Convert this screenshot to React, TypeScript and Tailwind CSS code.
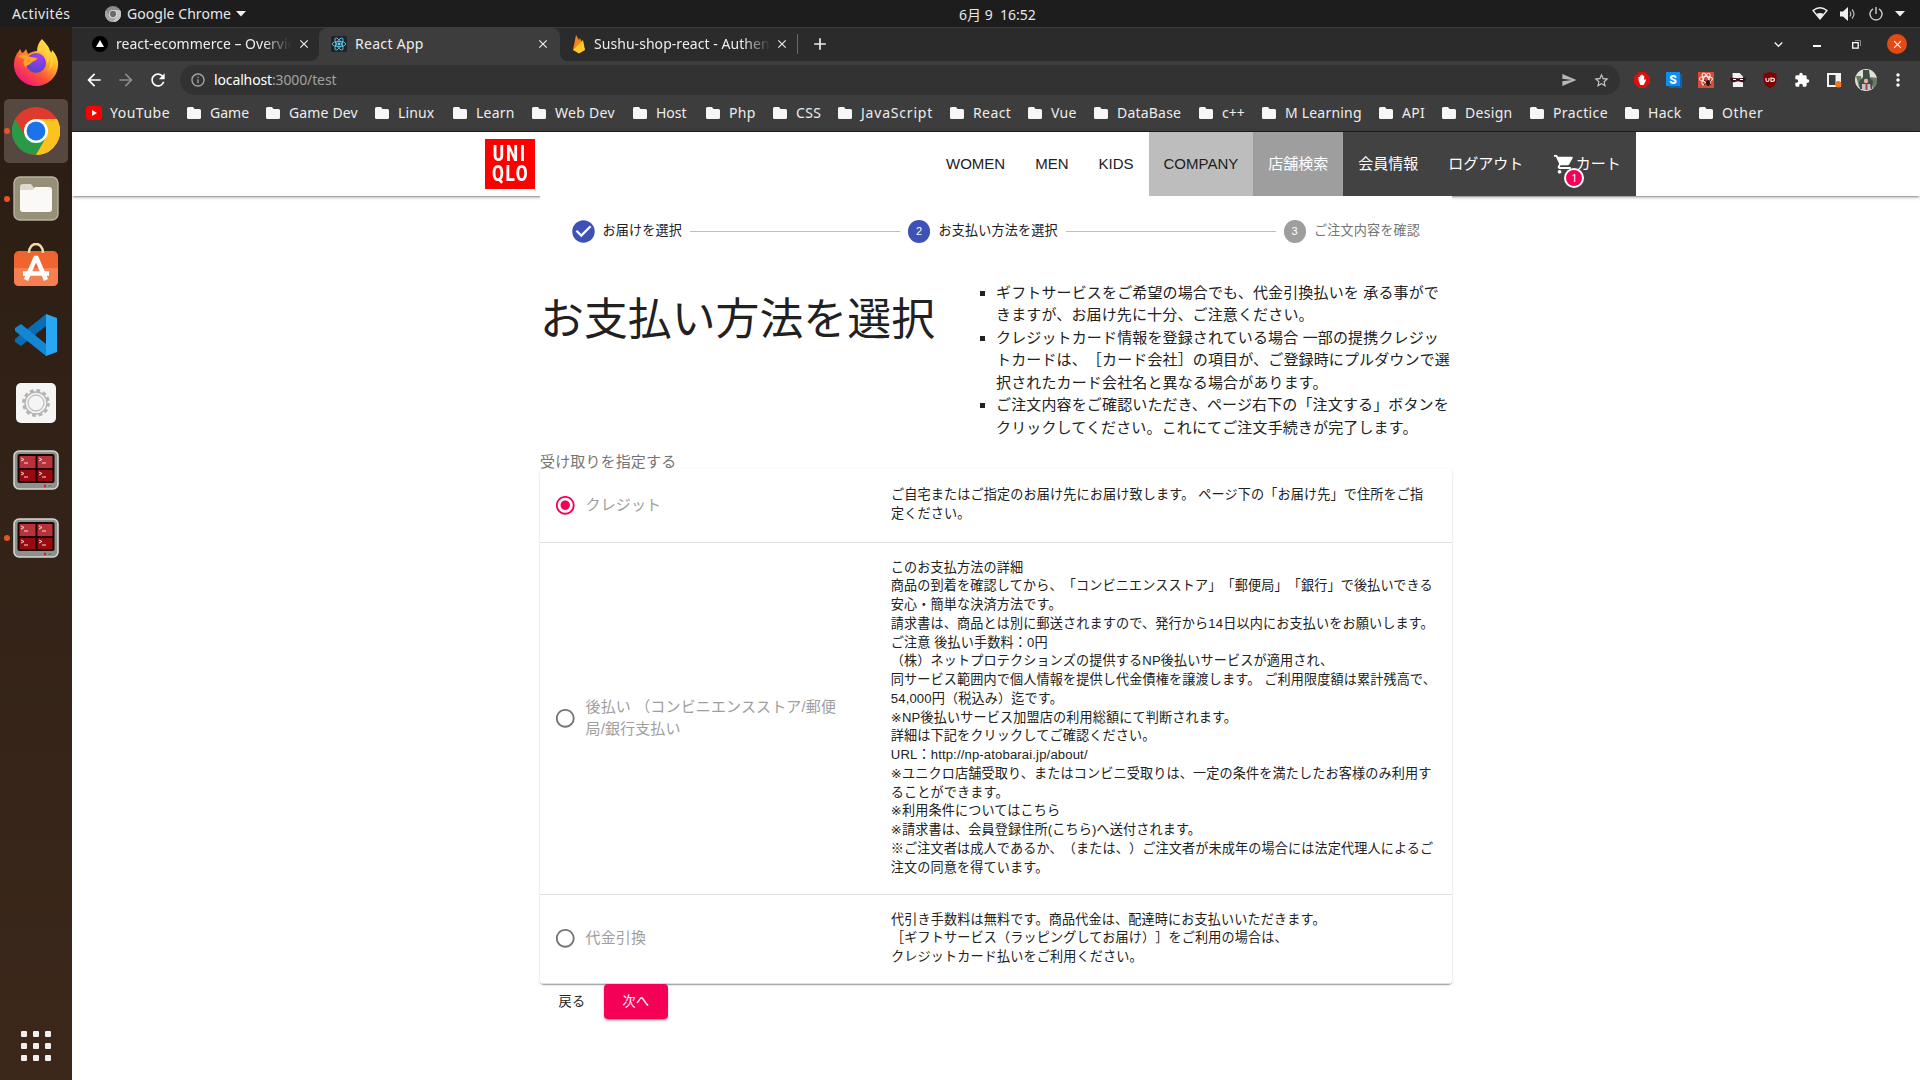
import React from "react";
import {
  MdArrowBack, MdArrowForward, MdRefresh, MdInfoOutline, MdClose, MdAdd, MdSend, MdStarOutline,
  MdExtension, MdMoreVert, MdShoppingCart, MdCheckCircle, MdExpandMore,
  MdRadioButtonChecked, MdRadioButtonUnchecked,
} from "react-icons/md";

const UI = "font-['Noto_Sans','Noto_Sans_CJK_JP',sans-serif]";

function ChromeLogo({ size, gray = false }: { size: number; gray?: boolean }) {
  const c = gray ? ["#8b8b8b", "#c4c4c4", "#a6a6a6", "#6b6b6b", "#e3e3e3"] : ["#de3b2d", "#fcc31e", "#2a9a48", "#1a73e8", "#fff"];
  return (
    <svg width={size} height={size} viewBox="0 0 48 48">
      <circle cx="24" cy="24" r="24" fill={c[0]} />
      <path d="M24 12h20.8A24 24 0 0 1 24 48l10.4-18z" fill={c[1]} />
      <path d="M3.2 12A24 24 0 0 0 24 48l10.4-18L24 24l-10.4 6z" fill={c[2]} />
      <path d="M24 48A24 24 0 0 0 44.8 12H24v12l10.4 6z" fill={c[1]} />
      <circle cx="24" cy="24" r="12" fill={c[4]} />
      <circle cx="24" cy="24" r="9.4" fill={c[3]} />
    </svg>
  );
}

function FirefoxLogo() {
  return (
    <svg width="46" height="47" viewBox="0 0 46 47">
      <defs>
        <linearGradient id="ff" x1="0.85" y1="0.05" x2="0.2" y2="0.95">
          <stop offset="0" stopColor="#fff44f" />
          <stop offset="0.35" stopColor="#ffb32c" />
          <stop offset="0.65" stopColor="#ff5634" />
          <stop offset="1" stopColor="#f0147e" />
        </linearGradient>
        <radialGradient id="fp" cx="0.6" cy="0.2" r="0.9">
          <stop offset="0" stopColor="#a43df0" />
          <stop offset="1" stopColor="#4c46c9" />
        </radialGradient>
      </defs>
      <path d="M29 0c3 4 7 7 8 12l1 3 1-4c3 3 7 9 6 16-1 12-11 20-22 20S1 38 1 26c0-6 2-11 5-14l1-2 2 4c2-1 3-2 4-4l2 5c3-2 7-3 9-3 0-5 2-9 5-12z" fill="url(#ff)" />
      <circle cx="23" cy="24" r="10" fill="url(#fp)" />
      <path d="M5 17c6-3 9 0 13 1l6 1c0 3-4 3-6 5-2 3-5 1-5 5-3-3-3-7-1-9-3-1-5-1-7-3z" fill="#ffa22a" />
      <path d="M25 12c6 0 10 5 9 12 3-2 2-5 2-7 3 4 2 11-1 15 5-4 7-12 3-19l-7-7-2-5c-2 4-2 7-4 11z" fill="#ffd23e" />
    </svg>
  );
}

function FilesIcon() {
  return (
    <svg width="46" height="46" viewBox="0 0 46 46">
      <rect x="1" y="1" width="44" height="43" rx="6" fill="#969079" stroke="#b7b29e" strokeWidth="1.4" />
      <path d="M7 11q0-3 3-3h8l3 4h16v6H7z" fill="#dcd9cb" />
      <path d="M7 14h13l2-3h14q3 0 3 3v19q0 3-3 3H10q-3 0-3-3z" fill="#faf9f7" />
    </svg>
  );
}

function SoftwareIcon() {
  return (
    <svg width="46" height="44" viewBox="0 0 46 44">
      <rect x="1" y="8" width="44" height="35" rx="5" fill="#f0642f" />
      <path d="M1 25h44v13q0 5-5 5H6q-5 0-5-5z" fill="#f47f50" />
      <path d="M16 10c0-12 14-12 14 0" fill="none" stroke="#f6d9a8" strokeWidth="2.6" />
      <path d="M13 37l9.500-22h1L33 37M10 30.500h26" fill="none" stroke="#fff" strokeWidth="4.500" />
    </svg>
  );
}

function CodeIcon() {
  return (
    <svg width="42" height="42" viewBox="0 0 42 42">
      <path d="M31 0v12L6 32 0 28v-3z" fill="#0a6cb3" />
      <path d="M31 42V30L6 10 0 14v3z" fill="#1387d2" />
      <path d="M31 0l11 4v34l-11 4z" fill="#2aa7f2" />
    </svg>
  );
}

function SettingsIcon() {
  return (
    <svg width="40" height="40" viewBox="0 0 40 40">
      <rect width="40" height="40" rx="5" fill="#f5f5f5" />
      <circle cx="20" cy="20" r="12.600" fill="none" stroke="#b3b3b3" strokeWidth="2.600" strokeDasharray="3.800 2.800" />
      <circle cx="20" cy="20" r="11" fill="#f5f5f5" stroke="#b3b3b3" strokeWidth="1.300" />
      <circle cx="20" cy="20" r="8" fill="none" stroke="#c0c0c0" strokeWidth="1.300" />
    </svg>
  );
}

function TerminalIcon() {
  return (
    <svg width="46" height="40" viewBox="0 0 46 40">
      <rect x="1" y="1" width="44" height="38" rx="5" fill="#8d918b" stroke="#d4d6d2" strokeWidth="1.600" />
      <rect x="4.500" y="4" width="37" height="29" rx="2" fill="#1c0505" />
      <path d="M6.500 6h16v12h-16zM24.500 6h15v12h-15z" fill="#b9323a" />
      <path d="M6.500 20h16v11h-16zM24.500 20h15v11h-15z" fill="#980a0f" />
      <path d="M8 8l3 1.500L8 11M11 13h4M26 8l3 1.500-3 1.500M29 13h4M8 22l3 1.500L8 25M11 27h4M26 22l3 1.500-3 1.500M29 27h4" stroke="#f3dada" fill="none" />
      <circle cx="32" cy="36" r="1.200" fill="#e11" />
      <rect x="34.500" y="34.700" width="5" height="2.600" rx="1.300" fill="#777" stroke="#aaa" strokeWidth="0.500" />
    </svg>
  );
}

function DockSlot({ running, active, className, children }: { running?: boolean; active?: boolean; className: string; children: React.ReactNode }) {
  return (
    <div className={`relative flex w-16 shrink-0 items-center justify-center rounded-[5px] ${active ? "bg-[#564841]" : ""} ${className}`}>
      {running && <span className="absolute top-1/2 left-0 h-1.5 w-1.5 -translate-y-1/2 rounded-full bg-[#e95420]" />}
      {children}
    </div>
  );
}

function Dock() {
  return (
    <aside className="flex w-[72px] shrink-0 flex-col items-center bg-gradient-to-b from-[#2b1d14] to-[#3c281b] pt-[3px]">
      <DockSlot className="h-16"><FirefoxLogo /></DockSlot>
      <DockSlot running active className="mt-[5px] h-16"><ChromeLogo size={48} /></DockSlot>
      <DockSlot running className="mt-1 h-16"><FilesIcon /></DockSlot>
      <DockSlot className="mt-0.5 h-16"><SoftwareIcon /></DockSlot>
      <DockSlot className="mt-1.5 h-16"><CodeIcon /></DockSlot>
      <DockSlot className="mt-1 h-16"><SettingsIcon /></DockSlot>
      <DockSlot className="mt-[3px] h-16"><TerminalIcon /></DockSlot>
      <DockSlot running className="mt-1 h-16"><TerminalIcon /></DockSlot>
      <div className="mt-auto mb-[19px] grid grid-cols-3 gap-1.5">
        {Array.from({ length: 9 }, (_, i) => <span key={i} className="h-1.5 w-1.5 rounded-[1px] bg-[#f1f0ee]" />)}
      </div>
    </aside>
  );
}

function SystemBar() {
  return (
    <div className={`flex h-[27px] items-center bg-[#1d1d1d] text-[14px] text-[#e8e8e8] ${UI}`}>
      <div className="w-[105px] pl-3 tracking-[0.4px]">Activités</div>
      <ChromeLogo size={16} gray />
      <div className="ml-1.5 w-[109px] tracking-[0.05px] whitespace-nowrap">Google Chrome</div>
      <svg width="10" height="6" viewBox="0 0 10 6"><path d="M0 0h10L5 5.500z" fill="#eee" /></svg>
      <div className="ml-[713px] w-[80px] pt-0.5 whitespace-pre">6月 9  16:52</div>
      <div className="ml-auto flex items-center pr-[15px]">
        <svg width="16" height="13" viewBox="0 0 16 13"><path d="M1 3.500Q8-2 15 3.500L8 12z" fill="none" stroke="#eee" strokeWidth="1.300" /><path d="M4.300 7Q8 5 11.700 7L8 12.500z" fill="#eee" /></svg>
        <svg className="ml-3" width="16" height="14" viewBox="0 0 16 14"><path d="M0 4.500h3L8 0v14L3 9.500H0z" fill="#eee" /><path d="M9.800 4.500q2 2.500 0 5M12 2.500q4 4.500 0 9" fill="none" stroke="#bbb" strokeWidth="1.200" /></svg>
        <svg className="ml-[13px]" width="14" height="14" viewBox="0 0 14 14"><path d="M4 1.800a6 6 0 1 0 6 0M7 0v7" fill="none" stroke="#ccc" strokeWidth="1.400" /></svg>
        <svg className="ml-3" width="10" height="6" viewBox="0 0 10 6"><path d="M0 0h10L5 5.500z" fill="#eee" /></svg>
      </div>
    </div>
  );
}

function ReactMark() {
  return (
    <svg width="16" height="16" viewBox="0 0 16 16">
      <rect width="16" height="16" rx="1.500" fill="#20232a" />
      <g fill="none" stroke="#61dafb" strokeWidth="0.800">
        <ellipse cx="8" cy="8" rx="6.800" ry="2.600" />
        <ellipse cx="8" cy="8" rx="6.800" ry="2.600" transform="rotate(60 8 8)" />
        <ellipse cx="8" cy="8" rx="6.800" ry="2.600" transform="rotate(120 8 8)" />
      </g>
      <circle cx="8" cy="8" r="1.400" fill="#61dafb" />
    </svg>
  );
}

function TabStrip() {
  const fade = "[mask-image:linear-gradient(to_right,black_84%,transparent)]";
  return (
    <div className="flex h-[34px] border-t border-[#3c3c3c] bg-[#3d3d3d] text-[14px] text-[#ededed]">
      <div className="flex w-[247px] items-center rounded-br-lg bg-[#2b2b2b] pb-px pl-5">
        <svg width="16" height="16" viewBox="0 0 16 16"><circle cx="8" cy="8" r="8" fill="#000" /><path d="M8 4l4 7H4z" fill="#fff" /></svg>
        <span className={`ml-2 w-[175px] overflow-hidden pb-px whitespace-nowrap ${fade}`}>react-ecommerce – Overview</span>
        <MdClose className="ml-1.5" size={14} />
      </div>
      <div className="bg-[#2b2b2b]">
        <div className="flex h-full w-[241px] items-center rounded-t-lg bg-[#3d3d3d] pb-px pl-3">
          <ReactMark />
          <span className="ml-2 w-[181px] pb-px tracking-[0.3px]">React App</span>
          <MdClose size={14} />
        </div>
      </div>
      <div className="flex flex-1 items-center rounded-bl-lg bg-[#2b2b2b] pb-px pl-3">
        <svg width="14" height="20" viewBox="0 0 14 20"><path d="M1 16L4 1l3 5 1-2 5 12z" fill="#f58220" /><path d="M1 16L11 6l2 10-6 3.500z" fill="#ffca28" /></svg>
        <span className={`ml-2 w-[177px] overflow-hidden pb-px tracking-[0.05px] whitespace-nowrap ${fade}`}>Sushu-shop-react - Authentication</span>
        <MdClose className="ml-1" size={14} />
        <span className="ml-2 h-5 w-px bg-[#6b6b6b]" />
        <MdAdd className="ml-3" size={20} />
        <div className="ml-auto flex items-center pr-[13px]">
          <MdExpandMore size={17} />
          <span className="mt-1 ml-[26px] h-[1.5px] w-2 bg-white" />
          <svg className="ml-[31px]" width="9" height="9" viewBox="0 0 9 9"><path d="M.7 2.700h5.500v5.500H.7z" fill="none" stroke="#fff" strokeWidth="1.300" /><path d="M3 .5h5.500V6" fill="none" stroke="#888" /></svg>
          <span className="ml-[26px] flex h-5 w-5 items-center justify-center rounded-full bg-[#e04b17]"><MdClose size={13} color="#fff" /></span>
        </div>
      </div>
    </div>
  );
}

function Toolbar() {
  return (
    <div className="flex h-[38px] items-center bg-[#3d3d3d] text-[14px] text-white">
      <MdArrowBack className="ml-3" size={20} />
      <MdArrowForward className="ml-3" size={20} color="#8b8b8b" />
      <MdRefresh className="ml-3" size={20} />
      <div className="ml-3 flex h-[30px] w-[1440px] items-center rounded-full bg-[#323232] pl-2.5">
        <MdInfoOutline size={16} color="#a5a8ab" />
        <span className="ml-2 pb-0.5 tracking-[-0.13px]">localhost<span className="text-[#a0a0a0]">:3000/test</span></span>
        <MdSend className="ml-auto" size={16} color="#b9b9b9" />
        <MdStarOutline className="mr-2.5 ml-4" size={17} color="#c9c9c9" />
      </div>
      <div className="ml-3.5 flex items-center gap-4">
        <svg width="16" height="16" viewBox="0 0 16 16"><path d="M5 0h6l5 5v6l-5 5H5l-5-5V5z" fill="#e30d0d" /><path d="M4.500 8V5h1.300V3.500h1.500V2.700h1.500v1h1.400V8l1.500-.8.3 1L9.700 13H6.300z" fill="#fff" /></svg>
        <svg width="16" height="16" viewBox="0 0 16 16"><path d="M2 2h14v14H3z" fill="#0b62a8" /><path d="M0 0h14v14H0z" fill="#0a8ff7" /><text x="3.300" y="11.500" fill="#fff" fontSize="12" fontWeight="900" fontFamily="Roboto">S</text></svg>
        <svg width="16" height="16" viewBox="0 0 16 16"><rect width="16" height="16" fill="#dc4836" /><g fill="none" stroke="#fbe5e2" strokeWidth="1.100"><ellipse cx="8" cy="7" rx="6.500" ry="2.500" /><ellipse cx="8" cy="7" rx="6.500" ry="2.500" transform="rotate(60 8 7)" /><ellipse cx="8" cy="7" rx="6.500" ry="2.500" transform="rotate(120 8 7)" /></g><ellipse cx="10" cy="11" rx="2" ry="3" fill="#2d0f0c" /><path d="M6 8l7 5M6 13l7-5" stroke="#2d0f0c" /></svg>
        <svg width="16" height="16" viewBox="0 0 16 16"><path d="M2.500 1h7L13 4.500V15h-10z" fill="#f3f3f3" /><path d="M0 5.500q8 1.500 16 0-.5 6-5 4.500l-3-.8-3 .8Q.5 11.500 0 5.500z" fill="#3a1015" /><path d="M3 7.500h3M10 7.500h3" stroke="#fff" strokeWidth="1.200" /></svg>
        <svg width="16" height="16" viewBox="0 0 16 16"><path d="M8 0l6.500 2v6q0 5-6.500 8Q1.500 13 1.500 8V2z" fill="#800000" /><path d="M4 6v2q0 1.500 1.500 1.500T7 8V6M9 6v3.500q3.500 0 3.500-1.750T9 6z" stroke="#fff" fill="none" strokeWidth="1.100" /></svg>
        <MdExtension size={16} />
        <svg width="16" height="16" viewBox="0 0 16 16"><path d="M1 1h14v14H1z" fill="#f3f3f3" /><path d="M3 3h6.500v10H3z" fill="#3a3a3a" /><circle cx="12.200" cy="12.300" r="3.200" fill="#f5761a" /></svg>
      </div>
      <svg className="ml-[13px]" width="22" height="22" viewBox="0 0 22 22"><circle cx="11" cy="11" r="11" fill="#dfe1df" /><path d="M1 7h5l1 12-3-1zM16 8l6 1v5l-4 6z" fill="#6d7a62" /><path d="M8 1h6l1 7 3 4-1 8H5l-1-7 4-5z" fill="#3f4f44" /><circle cx="11" cy="12" r="2.200" fill="#e2b9a2" /><path d="M7 15h8l1 6H7z" fill="#c9c3cf" /><path d="M10.500 15h2v6h-2z" fill="#b53a45" /></svg>
      <MdMoreVert className="ml-[11px]" size={20} />
    </div>
  );
}

const bookmarks: [string, string][] = [
  ["Game", "w-[79px]"],
  ["Game Dev", "w-[109px] tracking-[0.15px]"],
  ["Linux", "w-[78px] tracking-[0.1px]"],
  ["Learn", "w-[79px] tracking-[0.2px]"],
  ["Web Dev", "w-[101px] tracking-[0.3px]"],
  ["Host", "w-[73px]"],
  ["Php", "w-[67px] tracking-[0.3px]"],
  ["CSS", "w-[65px] tracking-[0.3px]"],
  ["JavaScript", "w-[112px] tracking-[0.8px]"],
  ["React", "w-[78px] tracking-[0.4px]"],
  ["Vue", "w-[66px] tracking-[0.3px]"],
  ["DataBase", "w-[105px] tracking-[0.2px]"],
  ["c++", "w-[63px]"],
  ["M Learning", "w-[117px] tracking-[0.2px]"],
  ["API", "w-[63px] tracking-[0.3px]"],
  ["Design", "w-[88px] tracking-[0.3px]"],
  ["Practice", "w-[95px] tracking-[0.4px]"],
  ["Hack", "w-[74px] tracking-[0.3px]"],
  ["Other", "w-[80px] tracking-[0.6px]"],
];

function BookmarkBar() {
  return (
    <div className="flex h-[33px] items-center border-b border-[#1f191d] bg-[#3d3d3d] pb-[5px] text-[14px] text-[#ededed]">
      <div className="ml-3.5 flex w-[101px] items-center">
        <svg width="16" height="14" viewBox="0 0 16 14"><rect width="16" height="14" rx="3.500" fill="#f00" /><path d="M6 4l5 3-5 3z" fill="#fff" /></svg>
        <span className="ml-2 tracking-[0.5px]">YouTube</span>
      </div>
      {bookmarks.map(([name, cls]) => (
        <div key={name} className={`flex shrink-0 items-center whitespace-nowrap ${cls}`}>
          <svg width="14" height="12" viewBox="0 0 14 12"><path d="M0 1.500Q0 0 1.500 0H6l1.500 2H12.500Q14 2 14 3.500v7q0 1.500-1.500 1.500h-11Q0 12 0 10.500z" fill="#f6f6f6" /></svg>
          <span className="ml-[9px]">{name}</span>
        </div>
      ))}
    </div>
  );
}

function SiteHeader() {
  return (
    <header className="flex h-16 items-center bg-white pl-[413px] text-[15px] leading-[22.5px] shadow-[0_3px_1px_-2px_rgba(0,0,0,0.2),0_2px_2px_rgba(0,0,0,0.14),0_1px_5px_rgba(0,0,0,0.12)]">
      <div className="flex h-[50px] w-[50px] flex-col items-center justify-center bg-[#f00] font-['Roboto'] text-[22px] leading-[20px] font-extrabold text-white">
        <span className="scale-x-[0.78] pl-[1px] tracking-[2.5px]">UNI</span>
        <span className="scale-x-[0.78] pl-[2px] tracking-[2px]">QLO</span>
      </div>
      <nav className="ml-[396px] flex h-full items-stretch">
        <a className="flex items-center px-[15px]">WOMEN</a>
        <a className="flex items-center px-[15px]">MEN</a>
        <a className="flex items-center px-[15px]">KIDS</a>
        <a className="flex items-center bg-[#bdbdbd] px-[15px]">COMPANY</a>
        <a className="flex items-center bg-[#9e9e9e] px-[15px] text-white">店舗検索</a>
        <a className="flex items-center bg-[#424242] px-[15px] text-white">会員情報</a>
        <a className="flex items-center bg-[#424242] px-[15px] text-white">ログアウト</a>
        <a className="flex items-center bg-[#424242] px-[15px] text-white">
          <span className="relative">
            <MdShoppingCart size={22.5} />
            <span className="absolute top-[15px] left-[11px] flex h-5 w-5 items-center justify-center rounded-full border-2 border-white bg-[#f50057] font-['Noto_Sans'] text-[11px]">1</span>
          </span>
          カート
        </a>
      </nav>
    </header>
  );
}

function StepNumber({ n, className }: { n: number; className: string }) {
  return <span className={`flex h-[22.5px] w-[22.5px] items-center justify-center rounded-full text-[11px] text-white ${className}`}>{n}</span>;
}

function Stepper() {
  return (
    <div className="flex items-center p-6 text-[13.125px] leading-[18.77px] tracking-[0.01071em]">
      <div className="flex items-center gap-2 px-2">
        <span className="flex h-[22.5px] w-[22.5px] items-center justify-center"><MdCheckCircle className="shrink-0" size={27} color="#3f51b5" /></span>
        <span>お届けを選択</span>
      </div>
      <div className="h-px flex-1 bg-[#bdbdbd]" />
      <div className="flex items-center gap-2 px-2">
        <StepNumber n={2} className="bg-[#3f51b5]" />
        <span>お支払い方法を選択</span>
      </div>
      <div className="h-px flex-1 bg-[#bdbdbd]" />
      <div className="flex items-center gap-2 px-2">
        <StepNumber n={3} className="bg-[#9e9e9e]" />
        <span className="text-[#757575]">ご注文内容を確認</span>
      </div>
    </div>
  );
}

function DetailLine({ text }: { text: string }) {
  if (text.startsWith("※") && !text.startsWith("※ご")) {
    return <div><span className="font-['DejaVu_Sans'] leading-none">※</span>{text.slice(1)}</div>;
  }
  return <div>{text}</div>;
}

function Option({ checked, label, lines }: { checked?: boolean; label: React.ReactNode; lines: string[] }) {
  return (
    <div className="flex items-center border-b border-[#e0e0e0] py-4">
      <div className="flex w-[335px] items-center pl-[5px]">
        <span className="p-[9px]">
          {checked ? <MdRadioButtonChecked size={22.5} color="#f50057" /> : <MdRadioButtonUnchecked size={22.5} color="#757575" />}
        </span>
        <span className="text-[15px] leading-[22.5px] tracking-[0.00938em] whitespace-nowrap text-[#9e9e9e]">{label}</span>
      </div>
      <div className="px-4 text-[13.125px] leading-[18.77px] tracking-[0.01071em] whitespace-nowrap">
        {lines.map((l) => <DetailLine key={l} text={l} />)}
      </div>
    </div>
  );
}

const creditLines = ["ご自宅またはご指定のお届け先にお届け致します。 ページ下の「お届け先」で住所をご指", "定ください。"];
const deferredLines = [
  "このお支払方法の詳細",
  "商品の到着を確認してから、「コンビニエンスストア」「郵便局」「銀行」で後払いできる",
  "安心・簡単な決済方法です。",
  "請求書は、商品とは別に郵送されますので、発行から14日以内にお支払いをお願いします。",
  "ご注意 後払い手数料：0円",
  "（株）ネットプロテクションズの提供するNP後払いサービスが適用され、",
  "同サービス範囲内で個人情報を提供し代金債権を譲渡します。 ご利用限度額は累計残高で、",
  "54,000円（税込み）迄です。",
  "※NP後払いサービス加盟店の利用総額にて判断されます。",
  "詳細は下記をクリックしてご確認ください。",
  "URL：http://np-atobarai.jp/about/",
  "※ユニクロ店舗受取り、またはコンビニ受取りは、一定の条件を満たしたお客様のみ利用す",
  "ることができます。",
  "※利用条件についてはこちら",
  "※請求書は、会員登録住所(こちら)へ送付されます。",
  "※ご注文者は成人であるか、（または、）ご注文者が未成年の場合には法定代理人によるご",
  "注文の同意を得ています。",
];
const codLines = [
  "代引き手数料は無料です。商品代金は、配達時にお支払いいただきます。",
  "［ギフトサービス（ラッピングしてお届け）］をご利用の場合は、",
  "クレジットカード払いをご利用ください。",
];

function Checkout() {
  return (
    <main className="relative mx-auto w-[912px] bg-white [text-spacing-trim:space-all]">
      <Stepper />
      <div className="flex pt-[15px]">
        <h1 className="w-[456px] pt-3 text-[43.9px] leading-[51px] whitespace-nowrap">お支払い方法を選択</h1>
        <ul className="w-[456px] list-[square] text-[15px] leading-[22.5px] tracking-[0.00938em] whitespace-nowrap">
          <li>ギフトサービスをご希望の場合でも、代金引換払いを 承る事がで<br />きますが、お届け先に十分、ご注意ください。</li>
          <li>クレジットカード情報を登録されている場合 一部の提携クレジッ<br />トカードは、［カード会社］の項目が、ご登録時にプルダウンで選<br />択されたカード会社名と異なる場合があります。</li>
          <li>ご注文内容をご確認いただき、ページ右下の「注文する」ボタンを<br />クリックしてください。これにてご注文手続きが完了します。</li>
        </ul>
      </div>
      <div className="mt-[15px] text-[15px] leading-[15px] tracking-[0.00938em] text-[#757575]">受け取りを指定する</div>
      <div className="rounded-[4px] bg-white shadow-[0_2px_1px_-1px_rgba(0,0,0,0.2),0_1px_1px_rgba(0,0,0,0.14),0_1px_3px_rgba(0,0,0,0.12)]">
        <Option checked label="クレジット" lines={creditLines} />
        <Option label={<>後払い （コンビニエンスストア/郵便<br />局/銀行支払い</>} lines={deferredLines} />
        <Option label="代金引換" lines={codLines} />
      </div>
      <div className="flex text-[13.125px] leading-[23px] tracking-[0.02857em]">
        <button className="w-16 py-1.5">戻る</button>
        <button className="relative w-16 rounded-[4px] bg-[#f50057] py-1.5 text-white shadow-[0_3px_1px_-2px_rgba(0,0,0,0.2),0_2px_2px_rgba(0,0,0,0.14),0_1px_5px_rgba(0,0,0,0.12)]">次へ</button>
      </div>
    </main>
  );
}

export default function App() {
  return (
    <div className="flex h-[1080px] w-[1920px] flex-col overflow-hidden bg-white">
      <SystemBar />
      <div className="flex min-h-0 flex-1">
        <Dock />
        <div className="flex min-w-0 flex-1 flex-col">
          <div className={UI}>
            <TabStrip />
            <Toolbar />
            <BookmarkBar />
          </div>
          <div className="flex-1 bg-white font-['Liberation_Sans','Noto_Sans_CJK_JP',sans-serif] text-[#212121]">
            <SiteHeader />
            <Checkout />
          </div>
        </div>
      </div>
    </div>
  );
}
